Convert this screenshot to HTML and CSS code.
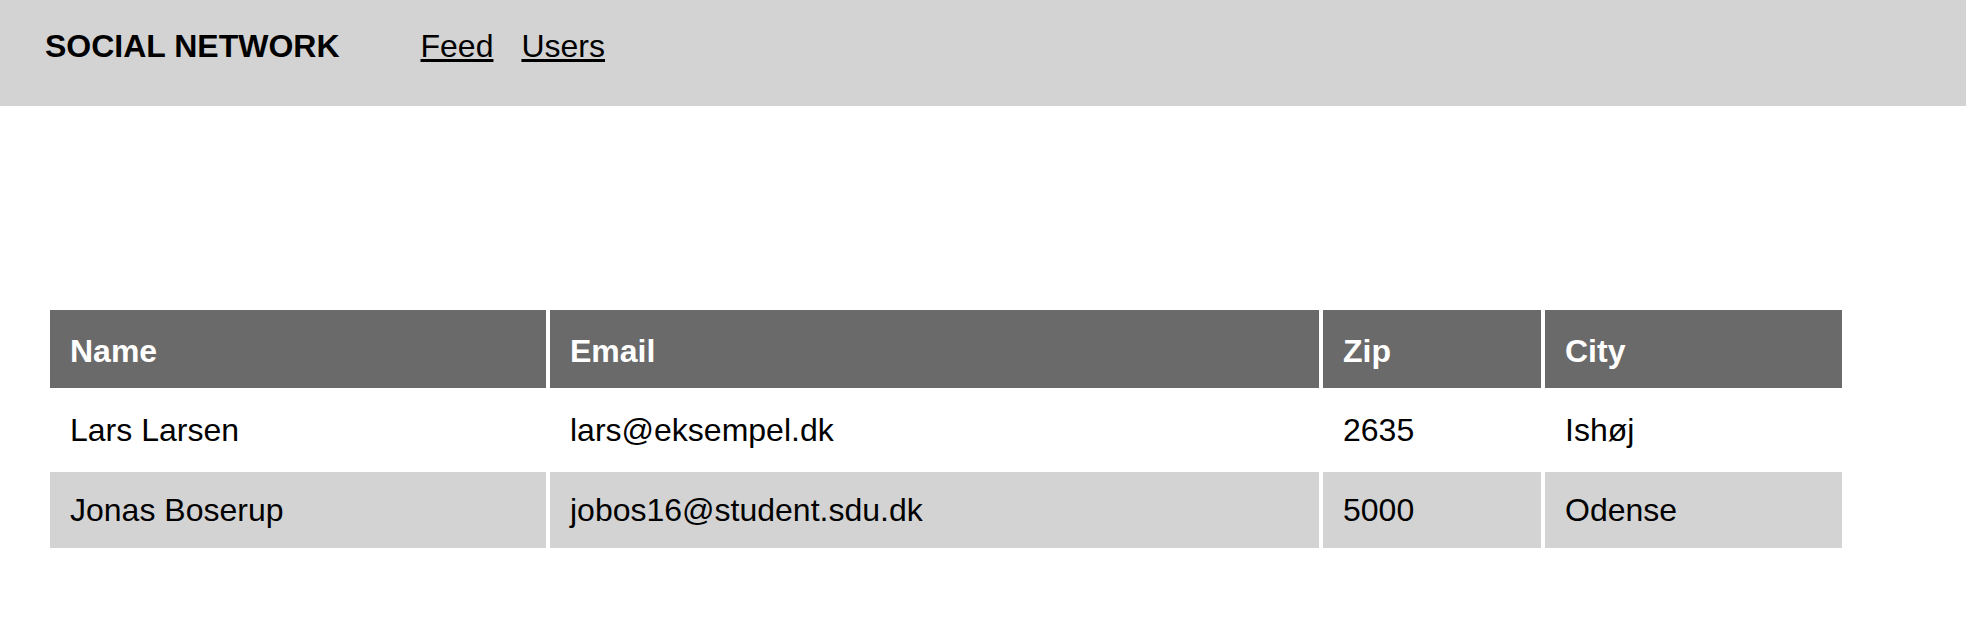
FILE: index.html
```html
<!DOCTYPE html>
<html lang="da">
<head>
<meta charset="utf-8">
<title>Social Network</title>
<link rel="stylesheet" href="styles.css">
</head>
<body>
<header class="topbar">
  <h1 class="brand">SOCIAL NETWORK</h1>
  <nav class="nav">
    <a href="#" class="nav-link">Feed</a>
    <a href="#" class="nav-link">Users</a>
  </nav>
</header>
<main class="content">
  <table class="users">
    <colgroup>
      <col class="col-name">
      <col class="col-email">
      <col class="col-zip">
      <col class="col-city">
    </colgroup>
    <thead>
      <tr><th>Name</th><th>Email</th><th>Zip</th><th>City</th></tr>
    </thead>
    <tbody>
      <tr><td>Lars Larsen</td><td>lars@eksempel.dk</td><td>2635</td><td>Ishøj</td></tr>
      <tr><td>Jonas Boserup</td><td>jobos16@student.sdu.dk</td><td>5000</td><td>Odense</td></tr>
    </tbody>
  </table>
</main>
</body>
</html>
```

FILE: styles.css
```css
html, body {
  margin: 0;
  padding: 0;
  background: #ffffff;
  font-family: "Liberation Sans", Arial, Helvetica, sans-serif;
  color: #000000;
}

.topbar {
  display: flex;
  align-items: flex-start;
  height: 106px;
  box-sizing: border-box;
  padding: 28px 0 0 45px;
  background: #d3d3d3;
}

.brand {
  margin: 0;
  font-size: 32px;
  line-height: 37px;
  font-weight: bold;
}

.nav {
  display: flex;
  gap: 28px;
  margin-left: 81px;
}

.nav-link {
  font-size: 32px;
  line-height: 37px;
  color: #000000;
  text-decoration: underline;
}

.content {
  padding: 200px 0 0 46px;
}

.users {
  table-layout: fixed;
  width: 1800px;
  border-collapse: separate;
  border-spacing: 4px;
  font-size: 32px;
  line-height: 37px;
}

.col-name { width: 496px; }
.col-email { width: 769px; }
.col-zip { width: 218px; }
.col-city { width: 297px; }

.users th {
  background: #6a6a6a;
  color: #ffffff;
  font-weight: bold;
  text-align: left;
  padding: 23px 20px 18px 20px;
}

.users td {
  padding: 20px 20px 19px 20px;
  text-align: left;
}

.users tbody tr:nth-child(even) td {
  background: #d3d3d3;
}
```
